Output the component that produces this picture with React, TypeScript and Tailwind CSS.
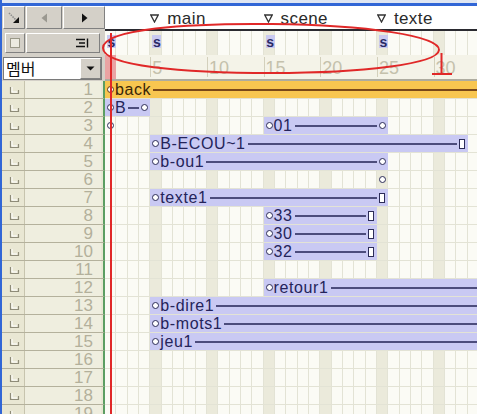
import React from 'react';

type Sprite = { from: number; to: number; label?: string; end: 'circle' | 'rect' | 'none'; orange?: boolean };

const channels: Sprite[][] = [
  [{ from: 1, to: 34, label: 'back', end: 'none', orange: true }],
  [{ from: 1, to: 4, label: 'B', end: 'circle' }],
  [{ from: 1, to: 1, end: 'none' }, { from: 15, to: 25, label: '01', end: 'circle' }],
  [{ from: 5, to: 32, label: 'B-ECOU~1', end: 'rect' }],
  [{ from: 5, to: 25, label: 'b-ou1', end: 'circle' }],
  [{ from: 25, to: 25, end: 'none' }],
  [{ from: 5, to: 25, label: 'texte1', end: 'rect' }],
  [{ from: 15, to: 24, label: '33', end: 'rect' }],
  [{ from: 15, to: 24, label: '30', end: 'rect' }],
  [{ from: 15, to: 24, label: '32', end: 'rect' }],
  [],
  [{ from: 15, to: 34, label: 'retour1', end: 'none' }],
  [{ from: 5, to: 34, label: 'b-dire1', end: 'none' }],
  [{ from: 5, to: 34, label: 'b-mots1', end: 'none' }],
  [{ from: 5, to: 34, label: 'jeu1', end: 'none' }],
  [],
  [],
  [],
  [],
];

const frameBg =
  'bg-[#fbfbf5] [background-image:repeating-linear-gradient(to_right,transparent_0px,transparent_10.333px,#e3e3d5_10.333px,#e3e3d5_11.333px),repeating-linear-gradient(to_right,transparent_0px,transparent_45.333px,#ebeadb_45.333px,#ebeadb_56.667px)]';

const raised = 'border border-t-white border-l-white border-r-[#808080] border-b-[#808080] bg-[#d4d0c8]';

const Dot: React.FC<{ orange?: boolean }> = ({ orange }) => (
  <span
    className={`shrink-0 w-[7px] h-[7px] rounded-full border-[1.5px] bg-white ${orange ? 'border-[#5a3410]' : 'border-[#2c2c58]'}`}
  />
);

const SpriteBar: React.FC<{ s: Sprite }> = ({ s }) => {
  const single = s.from === s.to;
  const bg = single ? '' : s.orange ? 'bg-[#f8c650]' : 'bg-[#c9c9f3]';
  return (
    <div
      className={`row-start-1 flex items-center h-[17px] min-w-0 overflow-hidden pl-[2px] pr-[2px] ${bg}`}
      style={{ gridColumn: `${s.from} / ${s.to + 1}` }}
    >
      <Dot orange={s.orange} />
      {s.label && (
        <span
          className={`shrink-0 ml-[1px] whitespace-nowrap text-[16px] leading-none tracking-[0.6px] ${
            s.orange ? 'text-[#3a2608]' : 'text-[#24245a]'
          }`}
        >
          {s.label}
        </span>
      )}
      {!single && (
        <span className={`flex-1 min-w-0 h-[2px] mx-[2px] ${s.orange ? 'bg-[#7a4818]' : 'bg-[#4c4c7c]'}`} />
      )}
      {s.end === 'circle' && <Dot />}
      {s.end === 'rect' && (
        <span className="shrink-0 w-[6px] h-[10px] border-[1.5px] border-[#2c2c58] bg-white mr-[1px]" />
      )}
    </div>
  );
};

const ChannelRow: React.FC<{ n: number; sprites: Sprite[] }> = ({ n, sprites }) => (
  <div className="flex h-[18px]">
    <div className="w-[103px] shrink-0 flex border-b border-[#b4b19c] bg-[#e9e7d3] border-r-2 border-r-[#5c9e62]">
      <div className="w-[23px] flex items-center justify-center border-r border-[#c7c4ae] pl-[2px]">
        <svg width="11" height="10" viewBox="0 0 11 10">
          <path d="M1.5 2 V8.5 H9.5 V5" fill="none" stroke="#8f8c78" strokeWidth="1.2" />
          <path d="M3 2 V7 H8" fill="none" stroke="#ffffff" strokeWidth="1" />
        </svg>
      </div>
      <div className="flex-1 flex items-center justify-end pr-[8px] bg-[#efeedf] mr-[2px]">
        <span className="text-[17px] leading-none text-[#b3b09b] font-['Liberation_Sans_Narrow','Liberation_Sans',sans-serif]">
          {n}
        </span>
      </div>
    </div>
    <div
      className={`flex-1 min-w-0 grid grid-cols-[repeat(34,11.333px)] items-start border-b border-[#e3e3d5] overflow-hidden ${frameBg}`}
    >
      {sprites.map((s, i) => (
        <SpriteBar key={i} s={s} />
      ))}
    </div>
  </div>
);

export default function App() {
  return (
    <div className="w-[481px] h-[420px] bg-white font-['Liberation_Sans',Arial,sans-serif]">
      <div className="relative w-[477px] h-[414px] overflow-hidden border-l-2 border-[#3166d6]">
        <div className="h-[3px] bg-[#dfe6f2]" />
        <div className="h-[3px] bg-[#3166d6]" />

        {/* header row: buttons + markers */}
        <div className="flex h-[25px]">
          <div className="w-[103px] shrink-0 flex bg-[#d4d0c8] pl-[1px] pb-[2px] gap-[1px]">
            <div className={`w-[22px] flex items-center justify-center ${raised}`}>
              <svg width="12" height="12" viewBox="0 0 12 12">
                <path d="M1 1 L8 8" stroke="#8a8a8a" strokeWidth="1.5" strokeDasharray="1.5 1" />
                <path d="M11 5 V11 H5 Z" fill="#111" />
              </svg>
            </div>
            <div className={`w-[36px] flex items-center justify-center ${raised}`}>
              <svg width="7" height="10" viewBox="0 0 7 10">
                <path d="M6 0.5 V9.5 L0.5 5 Z" fill="#9a9890" />
              </svg>
            </div>
            <div className={`flex-1 flex items-center justify-center ${raised}`}>
              <svg width="7" height="10" viewBox="0 0 7 10">
                <path d="M1 0.5 V9.5 L6.5 5 Z" fill="#111" />
              </svg>
            </div>
          </div>
          <div className="flex-1 min-w-0 overflow-hidden grid grid-cols-[repeat(34,11.333px)] items-center bg-white border-b-2 border-[#2a2a30] pt-[2px]">
            {(
              [
                [5, 'main'],
                [15, 'scene'],
                [25, 'texte'],
              ] as [number, string][]
            ).map(([f, t]) => (
              <div
                key={t}
                className="row-start-1 flex items-center gap-[8px] whitespace-nowrap"
                style={{ gridColumn: `${f} / span 9` }}
              >
                <svg width="9" height="9" viewBox="0 0 9 9" className="shrink-0">
                  <path d="M0.8 1 H8.2 L4.5 8 Z" fill="white" stroke="#333" strokeWidth="1.3" />
                </svg>
                <span className="text-[17px] leading-none text-[#2a2a2a] tracking-[0.4px]">{t}</span>
              </div>
            ))}
          </div>
        </div>

        {/* marker label row */}
        <div className="flex h-[24px]">
          <div className="w-[103px] shrink-0 flex items-center bg-[#d4d0c8] pl-[3px] pr-[5px] gap-[1px]">
            <div className={`w-[20px] h-[20px] flex items-center justify-center ${raised}`}>
              <span className="w-[10px] h-[10px] border border-[#9a9888] bg-[#eceae0]" />
            </div>
            <div className={`flex-1 h-[20px] flex items-center justify-end pr-[10px] ${raised}`}>
              <svg width="14" height="10" viewBox="0 0 14 10">
                <path d="M1 1.5 H10 M4 5 H10 M1 8.5 H10" stroke="#111" strokeWidth="1.4" />
                <path d="M12.5 0.5 V9.5" stroke="#111" strokeWidth="1.4" />
              </svg>
            </div>
          </div>
          <div className={`flex-1 min-w-0 overflow-hidden grid grid-cols-[repeat(34,11.333px)] items-center ${frameBg}`}>
            {[1, 5, 15, 25].map((f) => (
              <div key={f} className="row-start-1 pl-[2px] pb-[3px]" style={{ gridColumn: `${f} / span 1` }}>
                <span className="flex items-center justify-center w-[9px] h-[13px] bg-[#c9c9ef] text-[14px] leading-none font-bold text-[#2a2a66]">
                  s
                </span>
              </div>
            ))}
          </div>
        </div>

        {/* ruler row */}
        <div className="flex h-[26px]">
          <div className="w-[103px] shrink-0 flex items-center bg-[#d4d0c8] pl-[1px] pr-[3px]">
            <div className="flex-1 h-[23px] flex items-center bg-white border border-[#7a7a7a]">
              <span className="flex-1 pl-[2px] text-[16px] leading-none text-[#111] font-['Noto_Sans_CJK_KR','Noto_Sans',sans-serif]">
                멤버
              </span>
              <div className={`w-[21px] h-full flex items-center justify-center ${raised}`}>
                <svg width="9" height="5" viewBox="0 0 9 5">
                  <path d="M0.5 0.5 H8.5 L4.5 4.5 Z" fill="#111" />
                </svg>
              </div>
            </div>
          </div>
          <div className="flex-1 min-w-0 overflow-hidden grid grid-cols-[repeat(34,11.333px)] items-start bg-[#f4f3e8] border-b-2 border-[#aeaca0]">
            <div className="row-start-1 col-start-1 h-[24px] bg-[#eaa3a3]" />
            {[5, 10, 15, 20, 25, 30].map((n) => (
              <div
                key={n}
                className="row-start-1 h-[20px] mt-[2px] border-l border-[#d3d0bc]"
                style={{ gridColumn: `${n} / span 3` }}
              >
                <span className="text-[18px] leading-none text-[#c4c1ac] pl-[1px] font-['Liberation_Sans_Narrow','Liberation_Sans',sans-serif]">
                  {n}
                </span>
              </div>
            ))}
          </div>
        </div>

        {channels.map((sp, i) => (
          <ChannelRow key={i} n={i + 1} sprites={sp} />
        ))}

        {/* playhead */}
        <div className="absolute left-[108px] top-[33px] bottom-0 w-[2px] bg-[#e02828]" />

        {/* annotation */}
        <svg className="absolute inset-0 pointer-events-none" width="477" height="414" viewBox="0 0 477 414">
          <path
            d="M101 48 C101 29 185 23 270 24 C365 25 438 36 437 50 C436 64 360 73 270 73 C180 73 101 66 101 48 Z"
            fill="none"
            stroke="#e02828"
            strokeWidth="2"
          />
          <path d="M439.5 53 V73 M430 74 H450" fill="none" stroke="#e02828" strokeWidth="2" />
        </svg>
      </div>
    </div>
  );
}
